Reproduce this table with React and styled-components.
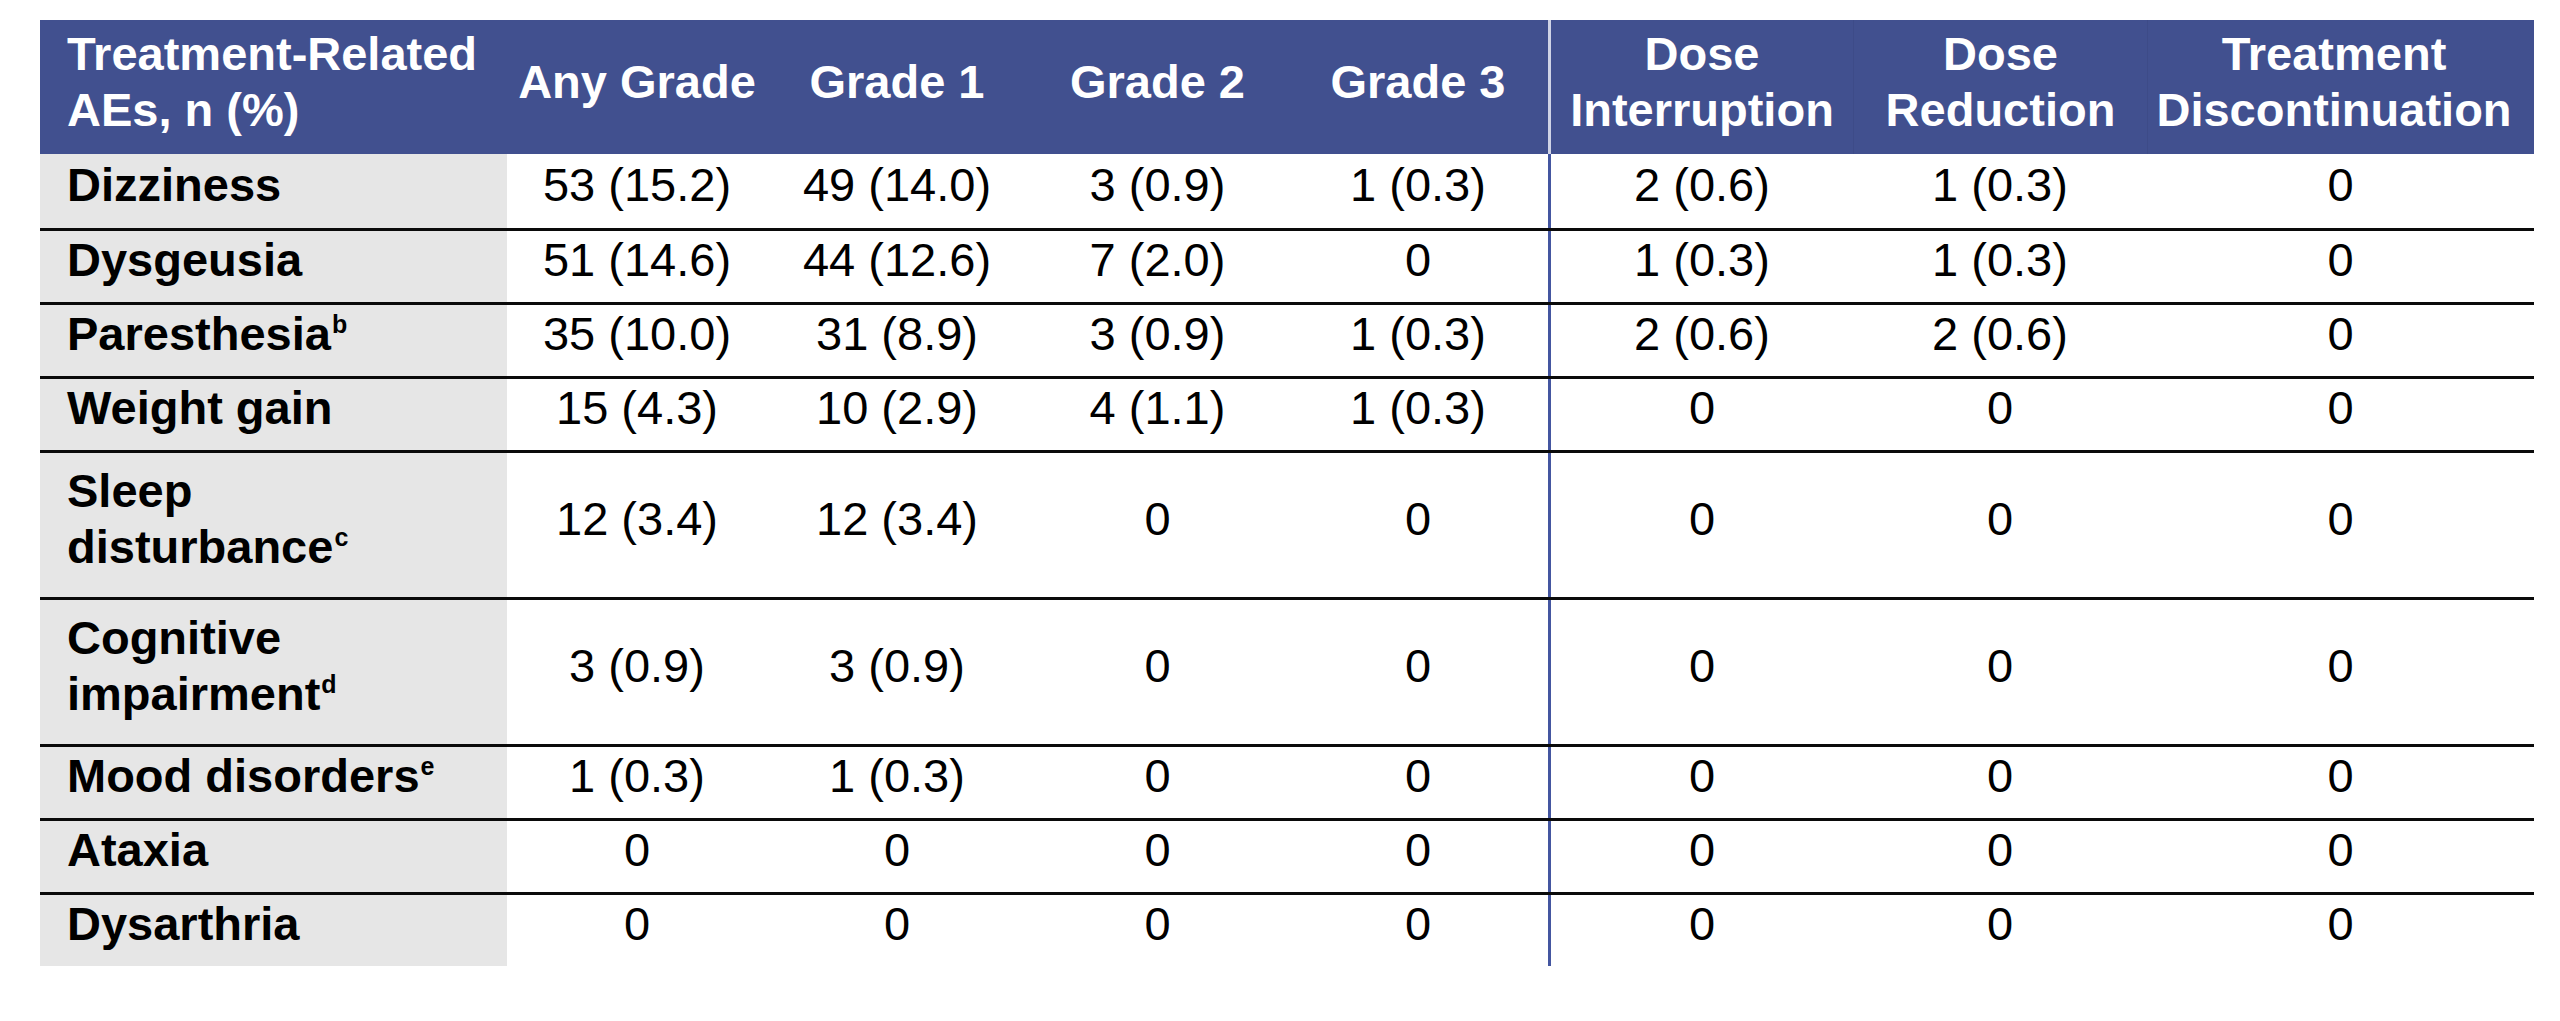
import React from 'react';
import styled, { createGlobalStyle } from 'styled-components';

const GlobalStyle = createGlobalStyle`
  * {
    box-sizing: border-box;
  }

  body {
    margin: 0;
    background: #ffffff;
    font-family: "Liberation Sans", Arial, sans-serif;
    color: #000000;
  }
`;

const COLUMNS = '467px 260px 260px 261px 260px 305px 294px 387px';
const DIVIDER_COLUMN = 5;

const StyledPage = styled.div`
  padding: 20px 0 0 40px;
`;

const StyledTable = styled.div`
  width: 2494px;
  display: flex;
  flex-direction: column;
`;

const StyledHeaderRow = styled.div`
  display: grid;
  grid-template-columns: ${COLUMNS};
  height: 134px;
  background: #41508f;
`;

const StyledHeaderCell = styled.div`
  display: flex;
  align-items: center;
  justify-content: ${({ left }) => (left ? 'flex-start' : 'center')};
  padding: 0 ${({ left }) => (left ? '0 0 27px' : '0')};
  padding-bottom: 10px;
  padding-right: ${({ shiftLeft }) => (shiftLeft ? '14px' : '0')};
  color: #ffffff;
  font-size: 47px;
  font-weight: 700;
  line-height: 1.2;
  text-align: ${({ left }) => (left ? 'left' : 'center')};
  white-space: nowrap;
  border-left: ${({ divider, seam }) =>
    divider ? '3px solid #cfd3e6' : seam ? '1px solid #3d4b88' : 'none'};
`;

const StyledRow = styled.div`
  display: grid;
  grid-template-columns: ${COLUMNS};
  height: ${({ tall }) => (tall ? '147px' : '74px')};
  border-top: ${({ first }) => (first ? 'none' : '3px solid #0a0a0a')};
`;

const StyledLabelCell = styled.div`
  display: flex;
  align-items: center;
  padding: 0 0 12px 27px;
  background: #e6e6e6;
  font-size: 47px;
  font-weight: 700;
  line-height: 1.2;
  white-space: nowrap;
`;

const StyledValueCell = styled.div`
  display: flex;
  align-items: center;
  justify-content: center;
  padding-bottom: 12px;
  font-size: 47px;
  font-weight: 400;
  line-height: 1.2;
  white-space: nowrap;
  border-left: ${({ divider }) => (divider ? '3px solid #4456a0' : 'none')};
`;

const StyledSup = styled.span`
  font-size: 25px;
  line-height: 0;
  vertical-align: 17px;
  margin-left: 1px;
`;

const headers = [
  ['Treatment-Related', 'AEs, n (%)'],
  ['Any Grade'],
  ['Grade 1'],
  ['Grade 2'],
  ['Grade 3'],
  ['Dose', 'Interruption'],
  ['Dose', 'Reduction'],
  ['Treatment', 'Discontinuation'],
];

const rows = [
  { label: ['Dizziness'], values: ['53 (15.2)', '49 (14.0)', '3 (0.9)', '1 (0.3)', '2 (0.6)', '1 (0.3)', '0'] },
  { label: ['Dysgeusia'], values: ['51 (14.6)', '44 (12.6)', '7 (2.0)', '0', '1 (0.3)', '1 (0.3)', '0'] },
  { label: ['Paresthesia'], note: 'b', values: ['35 (10.0)', '31 (8.9)', '3 (0.9)', '1 (0.3)', '2 (0.6)', '2 (0.6)', '0'] },
  { label: ['Weight gain'], values: ['15 (4.3)', '10 (2.9)', '4 (1.1)', '1 (0.3)', '0', '0', '0'] },
  { label: ['Sleep', 'disturbance'], note: 'c', values: ['12 (3.4)', '12 (3.4)', '0', '0', '0', '0', '0'] },
  { label: ['Cognitive', 'impairment'], note: 'd', values: ['3 (0.9)', '3 (0.9)', '0', '0', '0', '0', '0'] },
  { label: ['Mood disorders'], note: 'e', values: ['1 (0.3)', '1 (0.3)', '0', '0', '0', '0', '0'] },
  { label: ['Ataxia'], values: ['0', '0', '0', '0', '0', '0', '0'] },
  { label: ['Dysarthria'], values: ['0', '0', '0', '0', '0', '0', '0'] },
];

const Lines = ({ lines, note }) => (
  <div>
    {lines.map((line, i) => (
      <React.Fragment key={line}>
        {i > 0 && <br />}
        {line}
        {note && i === lines.length - 1 && <StyledSup>{note}</StyledSup>}
      </React.Fragment>
    ))}
  </div>
);

const App = () => (
  <>
    <GlobalStyle />
    <StyledPage>
      <StyledTable>
        <StyledHeaderRow>
          {headers.map((lines, i) => (
            <StyledHeaderCell
              key={lines.join(' ')}
              left={i === 0}
              divider={i === DIVIDER_COLUMN}
              seam={i > DIVIDER_COLUMN}
              shiftLeft={i === headers.length - 1}
            >
              <Lines lines={lines} />
            </StyledHeaderCell>
          ))}
        </StyledHeaderRow>
        {rows.map((row, r) => (
          <StyledRow key={row.label.join(' ')} first={r === 0} tall={row.label.length > 1}>
            <StyledLabelCell>
              <Lines lines={row.label} note={row.note} />
            </StyledLabelCell>
            {row.values.map((value, c) => (
              <StyledValueCell key={c} divider={c + 1 === DIVIDER_COLUMN}>
                {value}
              </StyledValueCell>
            ))}
          </StyledRow>
        ))}
      </StyledTable>
    </StyledPage>
  </>
);

export default App;
